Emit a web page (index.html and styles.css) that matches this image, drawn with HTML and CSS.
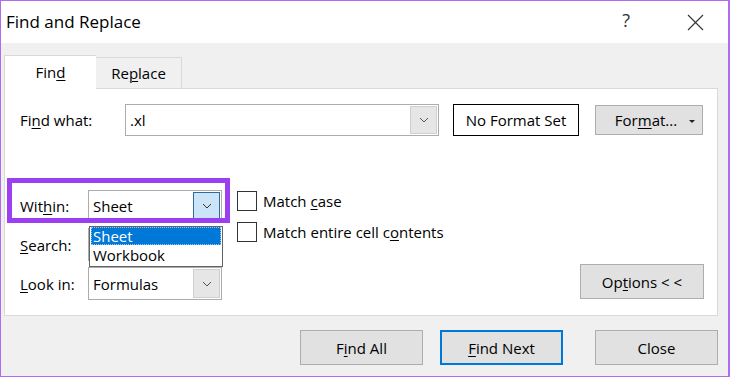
FILE: index.html
```html
<!DOCTYPE html>
<html>
<head>
<meta charset="utf-8">
<link rel="stylesheet" href="styles.css">
</head>
<body>
<div class="window">
  <div class="titlebar">
    <span class="title">Find and Replace</span>
    <span class="help">?</span>
    <span class="close-x">
      <svg width="17" height="17" viewBox="0 0 17 17"><path d="M1 1 L16 16 M16 1 L1 16" stroke="#333" stroke-width="1.1" fill="none"/></svg>
    </span>
  </div>
  <div class="client">
    <div class="tabs">
      <div class="tab active">Fin<u>d</u></div>
      <div class="tab">Re<u>p</u>lace</div>
    </div>
    <div class="panel">
      <div class="row-find">
        <label class="lbl-find">Fi<u>n</u>d what:</label>
        <div class="combo combo-find">
          <span class="combo-text">.xl</span>
          <span class="drop"><svg width="10" height="6" viewBox="0 0 10 6"><polyline points="1,1 5,5 9,1" stroke="#555" stroke-width="1" fill="none"/></svg></span>
        </div>
        <div class="nofmt">No Format Set</div>
        <div class="btn btn-format">For<u>m</u>at...<span class="caret"></span></div>
      </div>
      <div class="lower">
        <div class="opts">
          <div class="opt-row">
            <span class="lbl">Wit<u>h</u>in:</span>
            <div class="combo combo-sel">
              <span class="combo-text">Sheet</span>
              <span class="drop drop-hot"><svg width="10" height="6" viewBox="0 0 10 6"><polyline points="1,1 5,5 9,1" stroke="#333" stroke-width="1" fill="none"/></svg></span>
              <div class="listbox">
                <div class="item sel">Sheet</div>
                <div class="item">Workbook</div>
              </div>
            </div>
          </div>
          <div class="opt-row">
            <span class="lbl"><u>S</u>earch:</span>
            <div class="combo combo-sel"></div>
          </div>
          <div class="opt-row">
            <span class="lbl"><u>L</u>ook in:</span>
            <div class="combo combo-sel">
              <span class="combo-text">Formulas</span>
              <span class="drop"><svg width="10" height="6" viewBox="0 0 10 6"><polyline points="1,1 5,5 9,1" stroke="#555" stroke-width="1" fill="none"/></svg></span>
            </div>
          </div>
          <div class="highlight"></div>
        </div>
        <div class="checks">
          <div class="check"><span class="box"></span><span>Match <u>c</u>ase</span></div>
          <div class="check"><span class="box"></span><span>Match entire cell c<u>o</u>ntents</span></div>
        </div>
        <div class="btn btn-options">Op<u>t</u>ions &lt; &lt;</div>
      </div>
    </div>
    <div class="actions">
      <div class="btn act">F<u>i</u>nd All</div>
      <div class="btn act primary"><u>F</u>ind Next</div>
      <div class="btn act close">Close</div>
    </div>
  </div>
</div>
</body>
</html>
```

FILE: styles.css
```css
* { box-sizing: border-box; }
html, body { margin: 0; padding: 0; }
body {
  width: 730px;
  height: 377px;
  overflow: hidden;
  font-family: "Open Sans", "Noto Sans", sans-serif;
  font-size: 15px;
  color: #000;
  background: #fff;
}
u { text-decoration: underline; text-underline-offset: 2px; text-decoration-thickness: 1px; }

.window {
  width: 730px;
  height: 377px;
  border: 1px solid #b06cf0;
  border-right-width: 2px;
  background: #f0f0f0;
  display: flex;
  flex-direction: column;
}

.titlebar {
  height: 42px;
  background: #fff;
  display: flex;
  align-items: center;
  padding-left: 5px;
}
.title { flex: 1; font-size: 17px; margin-top: -2px; }
.help { font-size: 18px; color: #333; margin-right: 57px; margin-top: -4px; }
.close-x { width: 17px; height: 17px; margin-right: 24px; display: flex; }

.client { flex: 1; padding: 12px 10px 0 3px; display: flex; flex-direction: column; }

.tabs {
  display: flex;
  align-items: flex-end;
  height: 34px;
  margin-bottom: -1px;
  position: relative;
  z-index: 2;
}
.tab {
  height: 31px;
  margin-bottom: 1px;
  padding: 0 16px;
  width: 86px;
  border: 1px solid #d9d9d9;
  border-bottom: none;
  border-left: none;
  background: #f0f0f0;
  display: flex;
  align-items: center;
  justify-content: center;
}
.tab.active {
  height: 34px;
  width: 92px;
  margin-bottom: 0;
  background: #fff;
  border-left: 1px solid #d9d9d9;
  border-right: none;
  padding-bottom: 2px;
}

.panel {
  height: 228px;
  background: #fff;
  border: 1px solid #d9d9d9;
  padding: 15px 13px 15px 15px;
  display: flex;
  flex-direction: column;
}

.row-find { display: flex; align-items: center; height: 32px; }
.lbl-find { width: 105px; }
.combo {
  position: relative;
  border: 1px solid #acacac;
  background: #fff;
  display: flex;
  align-items: center;
}
.combo-text { flex: 1; padding-left: 4px; }
.combo-find { width: 314px; height: 32px; }
.drop {
  width: 27px;
  align-self: stretch;
  margin: 1px 1px 1px 0;
  background: #e6e6e6;
  border: 1px solid #cfcfcf;
  display: flex;
  align-items: center;
  justify-content: center;
}
.drop-hot { background: #cce4f7; border-color: #2f6a9c; }

.nofmt {
  margin-left: 14px;
  width: 126px;
  height: 32px;
  border: 1px solid #000;
  display: flex;
  align-items: center;
  justify-content: center;
}

.btn {
  background: #e1e1e1;
  border: 1px solid #adadad;
  display: flex;
  align-items: center;
  justify-content: center;
}
.btn-format {
  margin-left: 16px;
  width: 108px;
  height: 30px;
  position: relative;
  padding-right: 6px;
}
.caret {
  position: absolute;
  right: 7px;
  top: 14px;
  border-left: 3px solid transparent;
  border-right: 3px solid transparent;
  border-top: 3px solid #222;
}

.lower {
  margin-top: 54px;
  display: flex;
  height: 110px;
}
.opts {
  position: relative;
  display: flex;
  flex-direction: column;
  gap: 6px;
}
.opt-row { display: flex; align-items: center; height: 33px; }
.opt-row:first-child { height: 32px; }
.lbl { width: 68px; }
.combo-sel { width: 134px; height: 100%; }
.opt-row .combo-text { padding-left: 4px; }

.listbox {
  position: absolute;
  left: 0;
  top: 35px;
  width: 134px;
  height: 41px;
  background: #fff;
  border: 1px solid #646464;
  z-index: 3;
  padding: 0 1px;
  display: flex;
  flex-direction: column;
}
.item {
  flex: 1;
  display: flex;
  align-items: center;
  padding-left: 2px;
  line-height: 1;
}
.item.sel {
  flex: 0 0 18px;
  background: #0078d7;
  color: #fff;
  outline: 1px dotted #9cc7ee;
  outline-offset: -1px;
}

.highlight {
  position: absolute;
  left: -13px;
  top: -12px;
  width: 223px;
  height: 45px;
  border: 5px solid #9b3ff0;
  z-index: 4;
  pointer-events: none;
}

.checks {
  margin-left: 15px;
  margin-top: 1px;
  display: flex;
  flex-direction: column;
  gap: 11px;
}
.check { display: flex; align-items: center; height: 20px; gap: 6px; }
.box { width: 20px; height: 20px; border: 1px solid #333; background: #fff; }

.btn-options {
  margin-left: auto;
  align-self: flex-end;
  margin-bottom: 1px;
  width: 124px;
  height: 35px;
}

.actions {
  display: flex;
  justify-content: flex-end;
  margin-top: 14px;
}
.act { width: 123px; height: 35px; }
.act.primary { margin-left: 17px; border: 2px solid #0078d7; }
.act.close { margin-left: 32px; }
```
